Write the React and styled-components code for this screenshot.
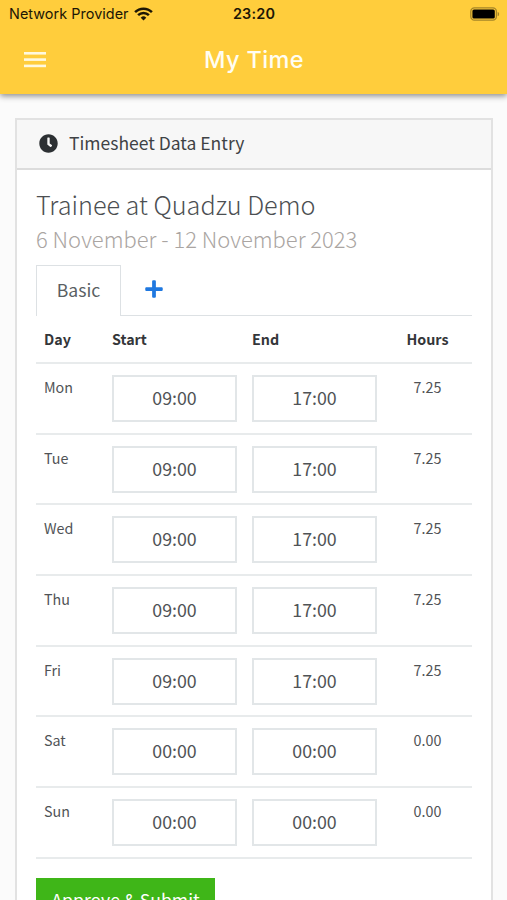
import React from 'react';
import styled, { createGlobalStyle } from 'styled-components';
import { FaClock, FaPlus } from 'react-icons/fa';

const days = [
  { day: 'Mon', start: '09:00', end: '17:00', hours: '7.25' },
  { day: 'Tue', start: '09:00', end: '17:00', hours: '7.25' },
  { day: 'Wed', start: '09:00', end: '17:00', hours: '7.25' },
  { day: 'Thu', start: '09:00', end: '17:00', hours: '7.25' },
  { day: 'Fri', start: '09:00', end: '17:00', hours: '7.25' },
  { day: 'Sat', start: '00:00', end: '00:00', hours: '0.00' },
  { day: 'Sun', start: '00:00', end: '00:00', hours: '0.00' }
];

const GlobalStyle = createGlobalStyle`
  * {
    box-sizing: border-box;
  }

  html, body {
    margin: 0;
    height: 900px;
    overflow: hidden;
    background: #fbfbfb;
  }

  body {
    font-family: 'Noto Sans CJK SC', 'Noto Sans', sans-serif;
    color: #46494c;
  }
`;

const Screen = styled.div`
  height: 900px;
  overflow: hidden;
  display: flex;
  flex-direction: column;
`;

const Header = styled.header`
  flex: none;
  height: 94px;
  background: #ffcd3c;
  box-shadow: 0 2px 6px rgba(0, 0, 0, 0.45);
  font-family: Inter, 'Liberation Sans', sans-serif;
`;

const StatusBar = styled.div`
  display: grid;
  grid-template-columns: 1fr auto 1fr;
  align-items: center;
  height: 27px;
  padding: 0 8px 0 9px;
  color: #1c1605;
`;

const Carrier = styled.div`
  display: flex;
  align-items: center;
  gap: 5px;
  font-size: 14.4px;
  line-height: 18px;
  letter-spacing: 0.05px;
`;

const Clock = styled.div`
  font-size: 14.4px;
  font-weight: 600;
  line-height: 18px;
  letter-spacing: 0.2px;
`;

const Battery = styled.svg`
  justify-self: end;
  margin-right: -2px;
`;

const NavBar = styled.div`
  display: grid;
  grid-template-columns: 46px 1fr 46px;
  align-items: center;
  height: 66px;
`;

const MenuButton = styled.button`
  display: flex;
  margin-left: 24px;
  padding: 0;
  border: none;
  background: none;
`;

const NavTitle = styled.h1`
  margin: 0;
  padding-left: 1px;
  text-align: center;
  color: #fffdf2;
  font-size: 23.5px;
  font-weight: 500;
  line-height: 30px;
  letter-spacing: 0.4px;
`;

const Card = styled.section`
  flex: none;
  height: 860px;
  margin: 24px 14px 0 15px;
  border: 2px solid #e2e2e2;
  background: #fff;
`;

const CardHeader = styled.div`
  display: flex;
  align-items: center;
  gap: 11px;
  height: 50px;
  padding: 0 0 2px 22px;
  border-bottom: 2px solid #dcdcdc;
  background: #f7f7f7;
  color: #2c3033;
  font-size: 17.5px;
  line-height: 26px;
`;

const CardTitle = styled.span`
  margin-top: -1px;
  color: #3f4245;
`;

const CardBody = styled.div`
  padding: 17px 19px 0 19px;
`;

const JobTitle = styled.h2`
  margin: 0;
  font-size: 25.2px;
  font-weight: 300;
  line-height: 34px;
  color: #4c4f52;
`;

const Period = styled.p`
  margin: 0;
  padding-top: 1px;
  font-size: 21.95px;
  font-weight: 300;
  line-height: 34px;
  color: #aaa5a2;
`;

const Tabs = styled.div`
  display: flex;
  height: 51px;
  margin-top: 9px;
`;

const Tab = styled.div`
  display: flex;
  align-items: center;
  justify-content: center;
  width: 85px;
  padding-bottom: 3px;
  border: 1px solid #dde1e4;
  border-bottom: none;
  font-size: 17.6px;
  line-height: 26px;
  color: #5a5f63;
`;

const AddTab = styled.div`
  flex: 1;
  display: flex;
  align-items: center;
  padding: 0 0 3px 23px;
  border-bottom: 1px solid #dde1e4;
  color: #1f78e0;
`;

const Row = styled.div`
  display: grid;
  grid-template-columns: 68px 140px 1fr 89px;
  height: ${props => (props.$head ? '48px' : '70.7px')};
  padding: ${props => (props.$head ? '10px' : '11px')} 0 0 8px;
  border-bottom: 2px solid #e8ebec;
  font-size: 14.3px;
  font-weight: ${props => (props.$head ? 700 : 400)};
  line-height: ${props => (props.$head ? '26px' : '24px')};
  color: ${props => (props.$head ? '#343639' : '#505356')};
`;

const HoursCell = styled.div`
  text-align: center;
`;

const TimeInput = styled.div`
  width: 125px;
  height: 47px;
  padding-top: 7px;
  border: 2px solid #e2e6e8;
  text-align: center;
  font-size: 17.8px;
  line-height: 26px;
`;

const SubmitButton = styled.button`
  display: block;
  width: 179px;
  height: 48px;
  margin-top: 19px;
  padding: 0 0 4px;
  border: none;
  background: #3fb618;
  color: #fff;
  font-family: inherit;
  font-size: 17.6px;
  line-height: 44px;
`;

const WifiIcon = () => (
  <svg width="19" height="14" viewBox="0 0 19 14" fill="none" stroke="currentColor" strokeWidth="2.5">
    <path d="M1.1 5.1a11.9 11.9 0 0 1 16.8 0" />
    <path d="M4.1 8.2a7.6 7.6 0 0 1 10.8 0" />
    <path d="M9.5 13.6 6.7 10.7a4 4 0 0 1 5.6 0z" fill="currentColor" stroke="none" />
  </svg>
);

const App = () => {
  return (
    <>
      <GlobalStyle />
      <Screen>
        <Header>
          <StatusBar>
            <Carrier>
              Network Provider
              <WifiIcon />
            </Carrier>
            <Clock>23:20</Clock>
            <Battery width="31" height="14" viewBox="0 0 31 14">
              <rect x="0.8" y="0.8" width="25.6" height="12.4" rx="3.6" fill="none" stroke="#a58528" strokeWidth="1.3" />
              <rect x="2.4" y="2.4" width="22.4" height="9.2" rx="1.6" fill="#000" />
              <path d="M27.7 4.9c1.9.5 1.9 3.7 0 4.2z" fill="#a58528" />
            </Battery>
          </StatusBar>
          <NavBar>
            <MenuButton aria-label="Menu">
              <svg width="22" height="16" viewBox="0 0 22 16" fill="#fff9de">
                <rect y="0" width="22" height="2.6" />
                <rect y="6.3" width="22" height="2.6" />
                <rect y="12.6" width="22" height="2.6" />
              </svg>
            </MenuButton>
            <NavTitle>My Time</NavTitle>
          </NavBar>
        </Header>
        <Card>
          <CardHeader>
            <FaClock size={19} />
            <CardTitle>Timesheet Data Entry</CardTitle>
          </CardHeader>
          <CardBody>
            <JobTitle>Trainee at Quadzu Demo</JobTitle>
            <Period>6 November - 12 November 2023</Period>
            <Tabs>
              <Tab>Basic</Tab>
              <AddTab>
                <FaPlus size={20} />
              </AddTab>
            </Tabs>
            <Row $head>
              <div>Day</div>
              <div>Start</div>
              <div>End</div>
              <HoursCell>Hours</HoursCell>
            </Row>
            {days.map(entry => (
              <Row key={entry.day}>
                <div>{entry.day}</div>
                <TimeInput>{entry.start}</TimeInput>
                <TimeInput>{entry.end}</TimeInput>
                <HoursCell>{entry.hours}</HoursCell>
              </Row>
            ))}
            <SubmitButton>Approve &amp; Submit</SubmitButton>
          </CardBody>
        </Card>
      </Screen>
    </>
  );
};

export default App;
